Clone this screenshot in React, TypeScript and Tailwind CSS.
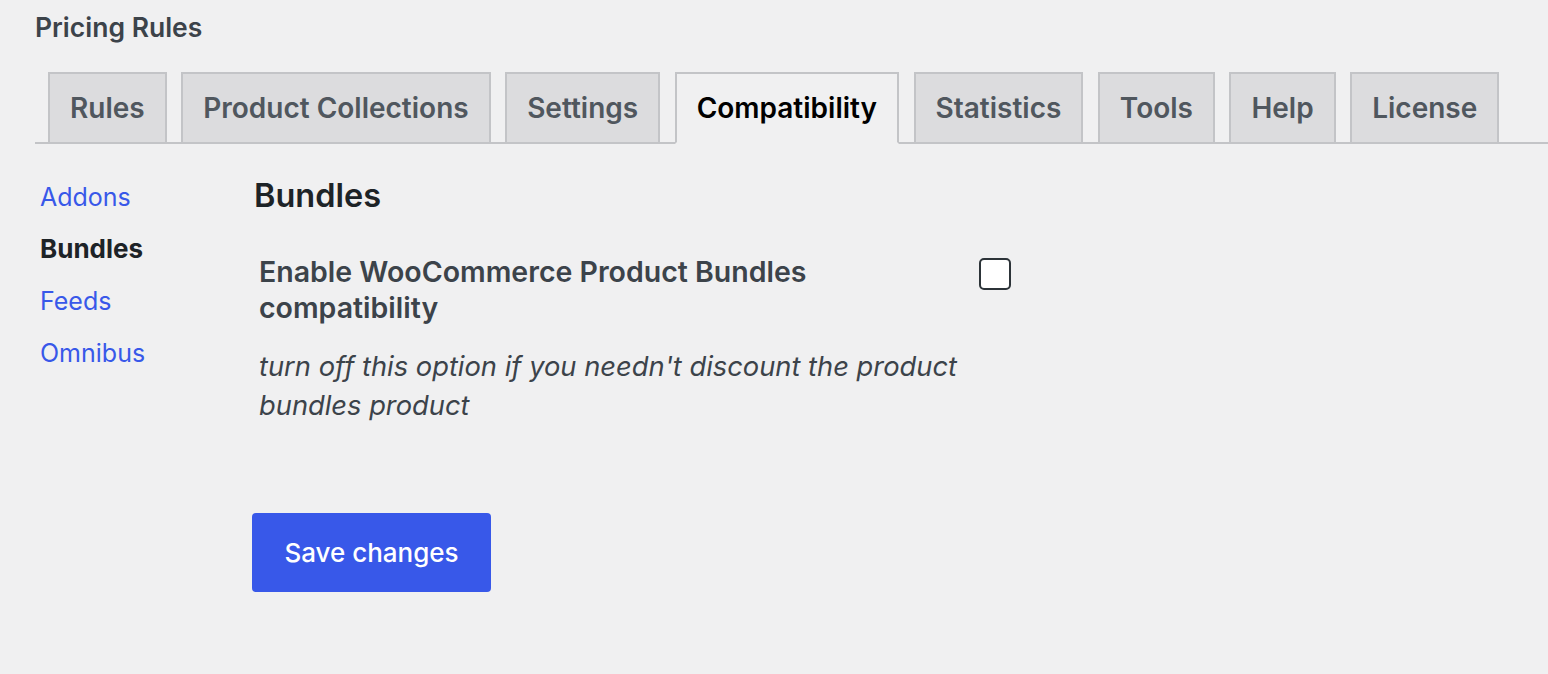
import React, { useState } from 'react';

const TABS = ['Rules', 'Product Collections', 'Settings', 'Compatibility', 'Statistics', 'Tools', 'Help', 'License'];
const SECTIONS = ['Addons', 'Bundles', 'Feeds', 'Omnibus'];

export default function App() {
  const [activeTab, setActiveTab] = useState('Compatibility');
  const [section, setSection] = useState('Bundles');
  const [enabled, setEnabled] = useState(false);

  return (
    <div className="min-h-screen bg-[#f0f0f1] pl-[35px] pt-[12px] font-['Inter','Noto_Sans',sans-serif]">
      <h1 className="text-[26.5px] leading-[30px] font-semibold text-[#3c434a]">Pricing Rules</h1>

      {/* tabs */}
      <nav className="mt-[30px] flex gap-[14.5px] pl-[13px] border-b-2 border-[#c3c4c7]">
        {TABS.map((tab) => {
          const active = tab === activeTab;
          return (
            <button
              key={tab}
              type="button"
              onClick={() => setActiveTab(tab)}
              className={`h-[72px] -mb-[2px] px-[20px] border-2 text-[28px] leading-[48px] font-semibold whitespace-nowrap ${
                active
                  ? 'bg-[#f0f0f1] text-black border-[#c3c4c7] border-b-[#f0f0f1]'
                  : 'bg-[#dcdcde] text-[#50575e] border-[#c3c4c7]'
              }`}
            >
              {tab}
            </button>
          );
        })}
      </nav>

      <div className="flex">
        {/* sub menu */}
        <ul className="w-[219px] pl-[5px] pt-[27px]">
          {SECTIONS.map((s) => (
            <li key={s}>
              <a
                href="#"
                onClick={(e) => { e.preventDefault(); setSection(s); }}
                className={`block leading-[52px] ${
                  s === section ? 'text-[26px] font-bold text-[#1d2327]' : 'text-[25px] text-[#3858e9]'
                }`}
              >
                {s}
              </a>
            </li>
          ))}
        </ul>

        <div className="pt-[32px]">
          <h2 className="text-[32.5px] leading-[40px] font-semibold text-[#1d2327]">Bundles</h2>

          <div className="mt-[38px] flex pl-[5px]">
            <div className="w-[720px]">
              <label htmlFor="bundles" className="block w-[700px] text-[28.5px] leading-[36px] font-semibold text-[#3c434a]">
                Enable WooCommerce Product Bundles compatibility
              </label>
              <p className="mt-[21px] text-[27.3px] leading-[39px] italic text-[#3c434a]">
                turn off this option if you needn't discount the product bundles product
              </p>
            </div>
            <input
              id="bundles"
              type="checkbox"
              checked={enabled}
              onChange={(e) => setEnabled(e.target.checked)}
              className="mt-[4px] w-[32px] h-[32px] appearance-none bg-white border-2 border-[#2c3338] rounded-[5px]"
            />
          </div>

          <button
            type="button"
            className="mt-[88px] ml-[-2px] w-[239px] h-[79px] rounded-[4px] bg-[#3858e9] text-white text-[26px] font-medium"
          >
            Save changes
          </button>
        </div>
      </div>
    </div>
  );
}
